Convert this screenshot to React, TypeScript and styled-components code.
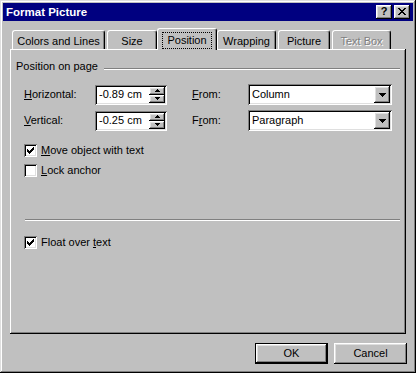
import React from 'react';
import styled, { createGlobalStyle, css } from 'styled-components';

const GlobalStyle = createGlobalStyle`
  html, body { margin: 0; padding: 0; background: #fff; }
  body {
    font-family: "Liberation Sans", Arial, sans-serif;
    font-size: 11px;
    color: #000;
  }
  * { box-sizing: border-box; }
  u { text-decoration: underline; text-underline-offset: 1px; }
`;

const raised = css`
  box-shadow: inset -1px -1px #000, inset 1px 1px #fff, inset -2px -2px #808080, inset 2px 2px #dfdfdf;
`;

const sunken = css`
  box-shadow: inset 1px 1px #808080, inset -1px -1px #fff, inset 2px 2px #000, inset -2px -2px #dfdfdf;
`;

const Window = styled.div`
  width: 416px;
  height: 373px;
  padding: 3px;
  background: #c0c0c0;
  box-shadow: inset -1px -1px #000, inset 1px 1px #dfdfdf, inset -2px -2px #808080, inset 2px 2px #fff;
  display: flex;
  flex-direction: column;
`;

const TitleBar = styled.div`
  height: 18px;
  background: #000080;
  display: flex;
  align-items: center;
  padding: 0 3px 0 3px;
`;

const Title = styled.span`
  color: #fff;
  font-weight: bold;
  font-size: 11.5px;
  line-height: 14px;
`;

const CaptionButtons = styled.div`
  margin-left: auto;
  display: flex;
  gap: 2px;
`;

const CaptionButton = styled.div`
  width: 16px;
  height: 14px;
  background: #c0c0c0;
  ${raised};
  display: flex;
  align-items: center;
  justify-content: center;
  font-weight: bold;
  font-size: 11px;
  line-height: 11px;
  padding-bottom: 1px;
`;

const Body = styled.div`
  display: flex;
  flex-direction: column;
  padding: 7px 7px 6px 7px;
`;

const TabRow = styled.div`
  display: flex;
  align-items: flex-end;
  gap: 2px;
  height: 21px;
  padding-left: 2px;
  position: relative;
  z-index: 1;
`;

const Tab = styled.div<{ $w: number; $active?: boolean; $disabled?: boolean }>`
  width: ${p => p.$w}px;
  height: ${p => (p.$active ? 22 : 19)}px;
  margin: ${p => (p.$active ? '0 -2px -1px -2px' : '0')};
  background: #c0c0c0;
  border-top: 1px solid #fff;
  border-left: 1px solid #fff;
  border-right: 1px solid #000;
  border-radius: 3px 3px 0 0;
  box-shadow: inset -1px 0 #808080;
  text-align: center;
  line-height: 13px;
  padding-top: ${p => (p.$active ? 3 : 4)}px;
  white-space: nowrap;
  color: ${p => (p.$disabled ? '#808080' : '#000')};
  text-shadow: ${p => (p.$disabled ? '1px 1px #fff' : 'none')};
`;

const FocusRect = styled.span`
  display: inline-block;
  border: 1px dotted #000;
  padding: 1px 4px;
  line-height: 13px;
`;

const Panel = styled.div`
  height: 285px;
  background: #c0c0c0;
  box-shadow: inset -1px -1px #000, inset 1px 1px #fff, inset -2px -2px #808080;
  padding: 11px 6px 0 6px;
  display: flex;
  flex-direction: column;
`;

const SectionHeader = styled.div`
  display: flex;
  align-items: flex-start;
  height: 13px;
  line-height: 13px;
`;

const Etched = styled.div<{ $top?: number; $left?: number }>`
  height: 2px;
  border-top: 1px solid #808080;
  border-bottom: 1px solid #fff;
  margin-top: ${p => p.$top ?? 0}px;
  margin-left: ${p => p.$left ?? 0}px;
`;

const HeaderLine = styled(Etched)`
  flex: 1;
`;

const Content = styled.div`
  padding-left: 8px;
  display: flex;
  flex-direction: column;
`;

const FieldGrid = styled.div`
  margin-top: 11px;
  display: grid;
  grid-template-columns: 71px 97px 56px 144px;
  grid-auto-rows: 21px;
  row-gap: 5px;
  align-items: center;
`;

const Label = styled.span`
  line-height: 13px;
`;

const SpinBox = styled.div`
  width: 72px;
  height: 20px;
  background: #fff;
  ${sunken};
  display: flex;
  align-items: center;
  padding: 2px;
`;

const FieldText = styled.span`
  flex: 1;
  padding-left: 2px;
  line-height: 13px;
  white-space: nowrap;
`;

const SpinButtons = styled.div`
  width: 16px;
  height: 16px;
  display: flex;
  flex-direction: column;
`;

const SpinArrow = styled.div`
  height: 8px;
  background: #c0c0c0;
  ${raised};
  display: flex;
  align-items: center;
  justify-content: center;
`;

const Combo = styled.div`
  width: 144px;
  height: 21px;
  background: #fff;
  ${sunken};
  display: flex;
  align-items: center;
  padding: 2px;
`;

const DropButton = styled.div`
  width: 16px;
  height: 17px;
  background: #c0c0c0;
  ${raised};
  display: flex;
  align-items: center;
  justify-content: center;
`;

const CheckList = styled.div`
  margin-top: 13px;
  display: flex;
  flex-direction: column;
  gap: 7px;
`;

const CheckRow = styled.div<{ $top?: number }>`
  display: flex;
  align-items: center;
  height: 13px;
  gap: 4px;
  margin-top: ${p => p.$top ?? 0}px;
  line-height: 13px;
`;

const CheckBox = styled.div`
  width: 13px;
  height: 13px;
  background: #fff;
  ${sunken};
  display: flex;
  align-items: center;
  justify-content: center;
`;

const ButtonRow = styled.div`
  margin-top: 9px;
  margin-right: -1px;
  display: flex;
  justify-content: flex-end;
  gap: 6px;
`;

const PushButton = styled.div<{ $default?: boolean }>`
  width: 73px;
  height: 21px;
  background: #c0c0c0;
  display: flex;
  align-items: center;
  justify-content: center;
  line-height: 13px;
  ${p =>
    p.$default
      ? css`box-shadow: inset 0 0 0 1px #000, inset -2px -2px #000, inset 2px 2px #fff, inset -3px -3px #808080, inset 3px 3px #dfdfdf;`
      : raised};
`;

const UpArrow = () => (
  <svg width="5" height="3" viewBox="0 0 5 3" shapeRendering="crispEdges">
    <path d="M2 0h1v1h1v1h1v1H0V2h1V1h1z" fill="#000" />
  </svg>
);

const DownArrow = ({ w = 5 }: { w?: number }) =>
  w === 7 ? (
    <svg width="7" height="4" viewBox="0 0 7 4" shapeRendering="crispEdges">
      <path d="M0 0h7v1H6v1H5v1H4v1H3V3H2V2H1V1H0z" fill="#000" />
    </svg>
  ) : (
    <svg width="5" height="3" viewBox="0 0 5 3" shapeRendering="crispEdges">
      <path d="M0 0h5v1H4v1H3v1H2V2H1V1H0z" fill="#000" />
    </svg>
  );

const CloseGlyph = () => (
  <svg width="8" height="7" viewBox="0 0 8 7" shapeRendering="crispEdges">
    <path
      d="M0 0h2v1h1v1h2V1h1V0h2v1H7v1H6v1H5v1h1v1h1v1h1v1H6V6H5V5H3v1H2v1H0V6h1V5h1V4h1V3H2V2H1V1H0z"
      fill="#000"
    />
  </svg>
);

const CheckGlyph = () => (
  <svg width="7" height="7" viewBox="0 0 7 7" shapeRendering="crispEdges">
    <path d="M6 0h1v3H6v1H5v1H4v1H3v1H2V6H1V5H0V2h1v1h1v1h1V3h1V2h1V1h1z" fill="#000" />
  </svg>
);

const Spin = ({ value }: { value: string }) => (
  <SpinBox>
    <FieldText>{value}</FieldText>
    <SpinButtons>
      <SpinArrow>
        <UpArrow />
      </SpinArrow>
      <SpinArrow>
        <DownArrow />
      </SpinArrow>
    </SpinButtons>
  </SpinBox>
);

const Select = ({ value }: { value: string }) => (
  <Combo>
    <FieldText>{value}</FieldText>
    <DropButton>
      <DownArrow w={7} />
    </DropButton>
  </Combo>
);

const Check = ({ checked, children, top }: { checked?: boolean; children: React.ReactNode; top?: number }) => (
  <CheckRow $top={top}>
    <CheckBox>{checked && <CheckGlyph />}</CheckBox>
    <span>{children}</span>
  </CheckRow>
);

export default function App() {
  return (
    <>
      <GlobalStyle />
      <Window>
        <TitleBar>
          <Title>Format Picture</Title>
          <CaptionButtons>
            <CaptionButton>?</CaptionButton>
            <CaptionButton>
              <CloseGlyph />
            </CaptionButton>
          </CaptionButtons>
        </TitleBar>
        <Body>
          <TabRow>
            <Tab $w={93}>Colors and Lines</Tab>
            <Tab $w={50}>Size</Tab>
            <Tab $w={60} $active>
              <FocusRect>Position</FocusRect>
            </Tab>
            <Tab $w={59}>Wrapping</Tab>
            <Tab $w={52}>Picture</Tab>
            <Tab $w={59} $disabled>
              Text Box
            </Tab>
          </TabRow>
          <Panel>
            <SectionHeader>
              <span>Position on page</span>
              <HeaderLine $top={8} $left={6} />
            </SectionHeader>
            <Content>
              <FieldGrid>
                <Label>
                  <u>H</u>orizontal:
                </Label>
                <Spin value="-0.89 cm" />
                <Label>
                  <u>F</u>rom:
                </Label>
                <Select value="Column" />
                <Label>
                  <u>V</u>ertical:
                </Label>
                <Spin value="-0.25 cm" />
                <Label>
                  F<u>r</u>om:
                </Label>
                <Select value="Paragraph" />
              </FieldGrid>
              <CheckList>
                <Check checked>
                  <u>M</u>ove object with text
                </Check>
                <Check>
                  <u>L</u>ock anchor
                </Check>
              </CheckList>
              <Etched $top={42} $left={1} />
              <Check checked top={15}>
                Float over <u>t</u>ext
              </Check>
            </Content>
          </Panel>
          <ButtonRow>
            <PushButton $default>OK</PushButton>
            <PushButton>Cancel</PushButton>
          </ButtonRow>
        </Body>
      </Window>
    </>
  );
}
